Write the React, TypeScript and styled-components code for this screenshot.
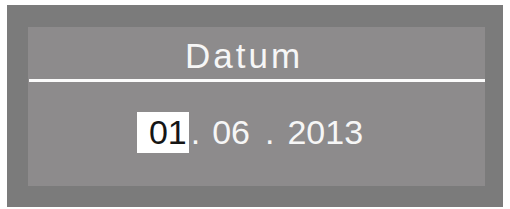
import React from "react";
import styled, { createGlobalStyle } from "styled-components";

const GlobalStyle = createGlobalStyle`
  html, body {
    margin: 0;
    padding: 0;
    background: #ffffff;
  }
  body {
    font-family: "Liberation Sans", Arial, sans-serif;
  }
`;

const Frame = styled.div`
  box-sizing: border-box;
  margin: 5px 0 0 7px;
  width: 496px;
  height: 202px;
  padding: 22px 18px 21px 21px;
  background: #7b7b7b;
`;

const Panel = styled.div`
  display: flex;
  flex-direction: column;
  height: 159px;
  background: #8d8b8c;
`;

const Title = styled.div`
  display: flex;
  justify-content: center;
  height: 52px;
  padding-right: 25px;
  font-size: 35px;
  line-height: 58px;
  letter-spacing: 3px;
  color: #f6f6f6;
`;

const Divider = styled.div`
  height: 3px;
  margin-left: 1px;
  background: #fbfbfb;
`;

const DateRow = styled.div`
  flex: 1;
  display: flex;
  justify-content: center;
  align-items: flex-start;
  padding: 30px 13px 0 0;
  font-size: 34px;
  line-height: 41px;
  color: #f6f6f6;
  white-space: pre;
`;

const Field = styled.span<{ $active?: boolean; $gap?: number }>`
  display: block;
  height: 41px;
  margin-left: ${(p) => p.$gap ?? 0}px;
  padding: ${(p) => (p.$active ? "0 2px 0 12px" : "0")};
  background: ${(p) => (p.$active ? "#ffffff" : "transparent")};
  color: ${(p) => (p.$active ? "#151515" : "#f6f6f6")};
`;

const Dot = styled.span<{ $gap: number }>`
  display: block;
  margin-left: ${(p) => p.$gap}px;
`;

export default function App() {
  return (
    <>
      <GlobalStyle />
      <Frame>
        <Panel>
          <Title>Datum</Title>
          <Divider />
          <DateRow>
            <Field $active>01</Field>
            <Dot $gap={2}>.</Dot>
            <Field $gap={12}>06</Field>
            <Dot $gap={15}>.</Dot>
            <Field $gap={13}>2013</Field>
          </DateRow>
        </Panel>
      </Frame>
    </>
  );
}
